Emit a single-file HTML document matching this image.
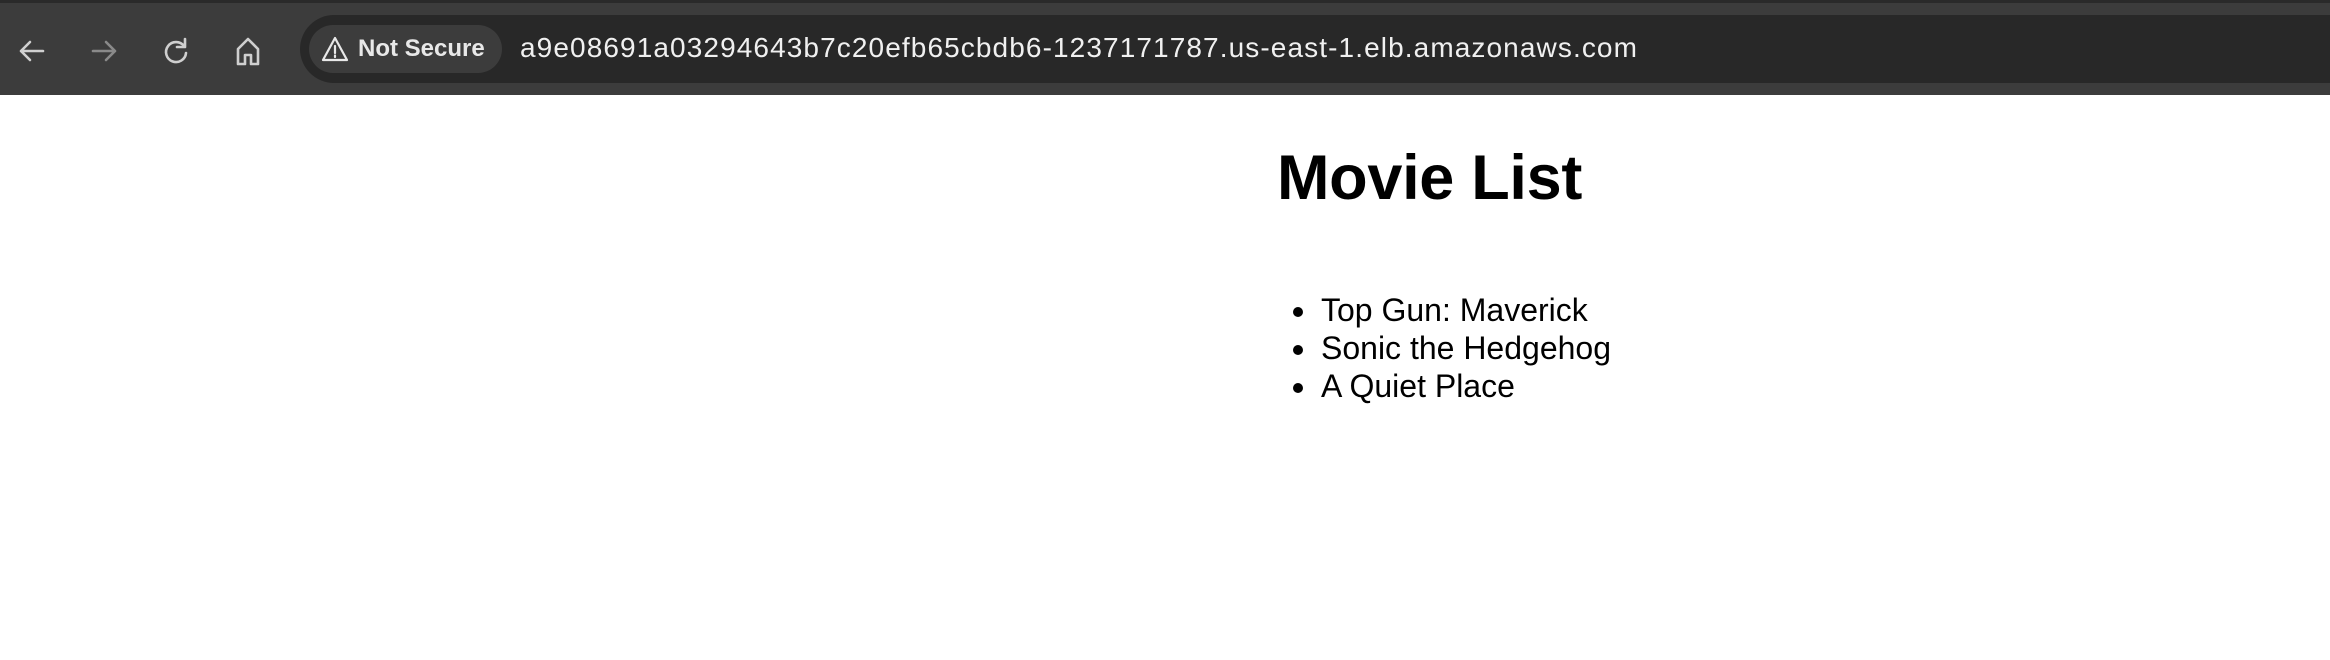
<!DOCTYPE html>
<html><head><meta charset="utf-8"><style>
html,body{margin:0;padding:0;width:2330px;height:660px;overflow:hidden;background:#fff;font-family:"Liberation Sans",Arial,sans-serif}
#bar{position:absolute;left:0;top:0;width:2330px;height:95px;background:#3c3c3c;border-top:3px solid #2a2a2a;box-sizing:border-box}
#pill{position:absolute;left:300px;top:15px;width:2100px;height:68px;border-radius:34px;background:#282828}
#chip{position:absolute;left:309px;top:25px;width:193px;height:48px;border-radius:24px;background:#3c3c3c;color:#e8e8e8;font-weight:bold;font-size:24px;line-height:48px}
#url{position:absolute;left:520px;top:28px;color:#f0f0f0;font-size:28px;line-height:40px;letter-spacing:1.1px;white-space:nowrap}
svg.ic{position:absolute;top:30px}
h1{position:absolute;left:1277px;top:141px;margin:0;font-size:63px;line-height:75px;font-weight:bold;color:#000;letter-spacing:-0.3px}
ul{position:absolute;left:1321px;top:291px;margin:0;padding:0;font-size:32px;line-height:38px;color:#000}
li{margin:0;list-style:none;position:relative}
li:before{content:"";position:absolute;left:-28px;top:16px;width:10px;height:10px;border-radius:50%;background:#000}
</style></head><body>
<div id="bar">
<svg class="ic" style="left:14px" width="36" height="36" viewBox="0 0 36 36" fill="none" stroke="#cfcfcf" stroke-width="2.6" stroke-linecap="round" stroke-linejoin="round"><path d="M29 18H7M16 9l-9 9 9 9"/></svg>
<svg class="ic" style="left:86px" width="36" height="36" viewBox="0 0 36 36" fill="none" stroke="#8a8a8a" stroke-width="2.6" stroke-linecap="round" stroke-linejoin="round"><path d="M7 18h22M20 9l9 9-9 9"/></svg>
<svg class="ic" style="left:158px" width="36" height="36" viewBox="0 0 36 36" fill="none" stroke="#cfcfcf" stroke-width="2.6" stroke-linecap="round"><path d="M26 13A10 10 0 1 0 28 20"/><path d="M27 6v8h-8" stroke-linejoin="round"/></svg>
<svg class="ic" style="left:230px" width="36" height="36" viewBox="0 0 36 36" fill="none" stroke="#cfcfcf" stroke-width="2.6" stroke-linejoin="round"><path d="M8 31V16L18 6l10 10v15h-7v-9h-6v9z"/></svg>
</div>
<div id="pill"></div>
<div id="chip"><svg style="position:absolute;left:12px;top:11px" width="28" height="26" viewBox="0 0 28 26" fill="none" stroke="#e8e8e8" stroke-width="2.2" stroke-linejoin="round"><path d="M14 2L26 24H2z"/><path d="M14 10v7M14 19.5v1.5" stroke-linecap="round"/></svg><span style="position:absolute;left:49px">Not Secure</span></div>
<div id="url">a9e08691a03294643b7c20efb65cbdb6-1237171787.us-east-1.elb.amazonaws.com</div>
<h1>Movie List</h1>
<ul><li>Top Gun: Maverick</li><li>Sonic the Hedgehog</li><li>A Quiet Place</li></ul>
</body></html>
